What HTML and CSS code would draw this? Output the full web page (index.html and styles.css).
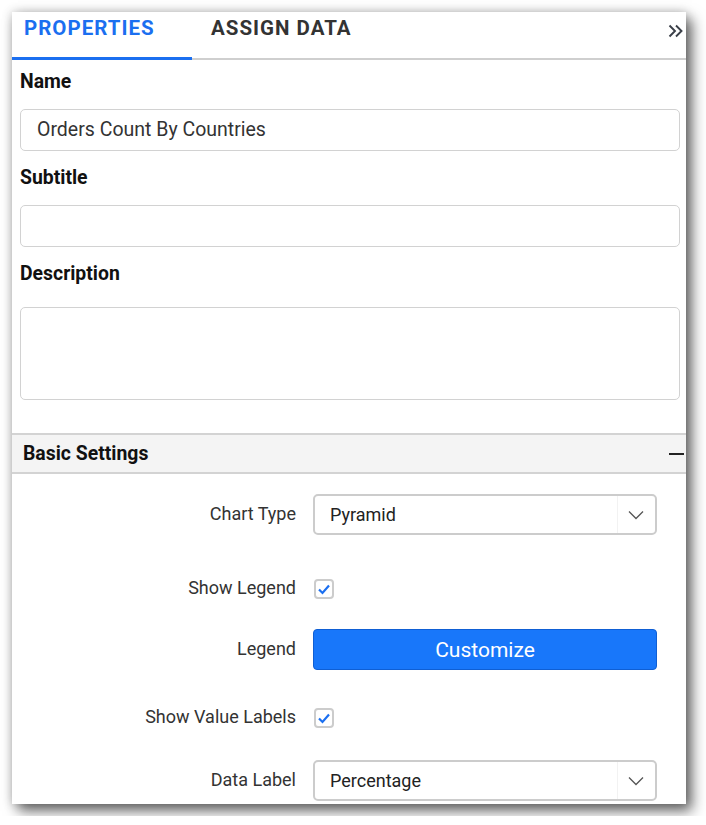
FILE: index.html
```html
<!DOCTYPE html>
<html>
<head>
<meta charset="utf-8">
<link rel="stylesheet" href="styles.css">
</head>
<body>
<div class="panel">
  <div class="tabs">
    <div class="tab active">PROPERTIES</div>
    <div class="tab">ASSIGN DATA</div>
    <div class="tab-spacer"></div>
    <div class="collapse">
      <svg width="16" height="14" viewBox="0 0 16 14"><path d="M1.5 1.5 L7 7 L1.5 12.5 M8 1.5 L13.5 7 L8 12.5" fill="none" stroke="#3a3f48" stroke-width="1.9"/></svg>
    </div>
  </div>
  <div class="fields">
    <div class="field-label">Name</div>
    <div class="input">Orders Count By Countries</div>
    <div class="field-label">Subtitle</div>
    <div class="input"></div>
    <div class="field-label desc">Description</div>
    <div class="textarea"></div>
  </div>
  <div class="section-head">
    <span>Basic Settings</span>
    <span class="minus"></span>
  </div>
  <div class="settings">
    <div class="lbl">Chart Type</div>
    <div class="dropdown"><span class="dd-text">Pyramid</span><span class="dd-btn"><svg width="16" height="10" viewBox="0 0 16 10"><path d="M1 1.5 L8 8.5 L15 1.5" fill="none" stroke="#555" stroke-width="1.3"/></svg></span></div>
    <div class="lbl">Show Legend</div>
    <div class="ctl"><span class="check"><svg width="14" height="12" viewBox="0 0 14 12"><path d="M2 6.5 L5.5 10 L12 2.5" fill="none" stroke="#1b6ff0" stroke-width="2.2"/></svg></span></div>
    <div class="lbl">Legend</div>
    <div class="button">Customize</div>
    <div class="lbl">Show Value Labels</div>
    <div class="ctl"><span class="check"><svg width="14" height="12" viewBox="0 0 14 12"><path d="M2 6.5 L5.5 10 L12 2.5" fill="none" stroke="#1b6ff0" stroke-width="2.2"/></svg></span></div>
    <div class="lbl">Data Label</div>
    <div class="dropdown"><span class="dd-text">Percentage</span><span class="dd-btn"><svg width="16" height="10" viewBox="0 0 16 10"><path d="M1 1.5 L8 8.5 L15 1.5" fill="none" stroke="#555" stroke-width="1.3"/></svg></span></div>
  </div>
</div>
</body>
</html>
```

FILE: styles.css
```css
html, body {
  margin: 0;
  padding: 0;
  background: #ffffff;
}
body {
  padding: 12px;
  font-family: Roboto, "Liberation Sans", sans-serif;
  color: #222;
}
.panel {
  width: 674px;
  height: 792px;
  background: #fff;
  overflow: hidden;
  box-shadow: 0 0 10px rgba(0,0,0,0.22), 6px 7px 13px rgba(0,0,0,0.58);
}
.tabs {
  display: flex;
  height: 46px;
  border-bottom: 2px solid #cfcfcf;
  align-items: stretch;
}
.tab {
  display: flex;
  align-items: center;
  font-weight: 700;
  font-size: 20.5px;
  letter-spacing: 1px;
  color: #333;
  padding-bottom: 14px;
  box-sizing: border-box;
}
.tab.active {
  width: 180px;
  padding-left: 12px;
  color: #1b6ff0;
  border-bottom: 3px solid #1b6ff0;
  margin-bottom: -2px;
  padding-bottom: 13px;
}
.tab + .tab {
  padding-left: 19px;
}
.tab-spacer { flex: 1; }
.collapse {
  display: flex;
  align-items: center;
  padding-right: 2px;
  padding-bottom: 9px;
}
.fields {
  padding: 10px 6px 0 8px;
  display: flex;
  flex-direction: column;
}
.field-label {
  font-weight: 700;
  font-size: 19.4px;
  line-height: 24px;
  color: #111;
  margin-bottom: 15px;
}
.field-label.desc { margin-bottom: 21px; }
.input {
  height: 42px;
  box-sizing: border-box;
  border: 1px solid #d2d2d2;
  border-radius: 5px;
  padding-left: 16px;
  font-size: 19.5px;
  line-height: 40px;
  color: #333;
  margin-bottom: 15px;
}
.textarea {
  height: 93px;
  box-sizing: border-box;
  border: 1px solid #d2d2d2;
  border-radius: 5px;
}
.section-head {
  margin-top: 33px;
  height: 41px;
  box-sizing: border-box;
  border-top: 2px solid #d3d3d3;
  border-bottom: 2px solid #d3d3d3;
  background: #f4f4f4;
  display: flex;
  align-items: center;
  justify-content: space-between;
  padding: 0 2px 0 11px;
  font-weight: 700;
  font-size: 19.4px;
  color: #111;
}
.minus {
  width: 15px;
  height: 2px;
  background: #222;
}
.settings {
  display: grid;
  grid-template-columns: 284px 344px;
  grid-template-rows: 74px 61px 68px 63px 41px;
  column-gap: 17px;
  margin-top: 20px;
  align-items: start;
}
.lbl {
  height: 41px;
  display: flex;
  align-items: center;
  justify-content: flex-end;
  font-size: 18px;
  color: #333;
  padding-bottom: 2px;
  box-sizing: border-box;
}
.dropdown {
  height: 41px;
  box-sizing: border-box;
  border: 2px solid #cccccc;
  border-radius: 5px;
  display: flex;
  align-items: center;
}
.dd-text {
  flex: 1;
  padding-left: 15px;
  font-size: 18px;
  color: #222;
}
.dd-btn {
  width: 35px;
  height: 100%;
  border-left: 1px solid #f2f2f2;
  display: flex;
  align-items: center;
  justify-content: center;
  padding-right: 2px;
}
.ctl {
  height: 41px;
  display: flex;
  align-items: center;
}
.check {
  width: 20px;
  height: 20px;
  box-sizing: border-box;
  border: 2px solid #cccccc;
  border-radius: 4px;
  display: flex;
  align-items: center;
  justify-content: center;
  margin-left: 1px;
}
.button {
  height: 41px;
  box-sizing: border-box;
  background: #1877fa;
  border: 1px solid #0f5fd4;
  border-radius: 4px;
  color: #fff;
  font-size: 21px;
  display: flex;
  align-items: center;
  justify-content: center;
}
```
